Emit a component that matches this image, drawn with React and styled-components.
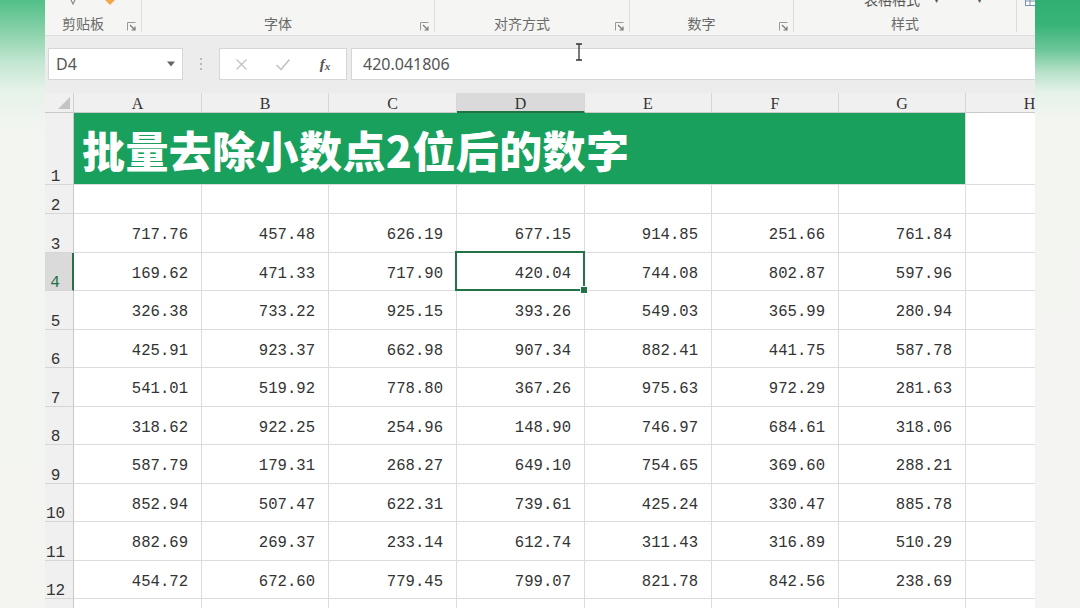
import React from 'react';
import styled, { createGlobalStyle } from 'styled-components';

const GlobalStyle = createGlobalStyle`
  html, body {
    margin: 0;
    padding: 0;
  }
  body {
    width: 1080px;
    height: 608px;
    overflow: hidden;
    background: #f4f5f1;
    font-family: "Noto Sans", "Noto Sans CJK SC", sans-serif;
  }
`;

const Screen = styled.div`
  display: flex;
  width: 1080px;
  height: 608px;
  overflow: hidden;
`;

const SideBlur = styled.div`
  flex: 0 0 45px;
  background: ${({ $side }) =>
    $side === 'left'
      ? 'linear-gradient(to bottom, #52bf88 0px, #86d1a8 30px, #bfe5cf 60px, #e6f2e9 90px, #f2f5f0 130px, #f4f5f1 100%)'
      : 'linear-gradient(to bottom, #2fb072 0px, #39b478 25px, #6cc699 50px, #b7e1c9 72px, #e4f2e9 92px, #f3f5f1 120px, #f4f5f2 100%)'};
`;

const Window = styled.div`
  flex: 0 0 990px;
  display: flex;
  flex-direction: column;
  overflow: hidden;
  background: #fff;
  position: relative;
`;

/* ---------- ribbon ---------- */

const Ribbon = styled.div`
  flex: 0 0 35px;
  display: flex;
  background: #f5f5f3;
  border-bottom: 1px solid #dedede;
`;

const Group = styled.div`
  flex: 0 0 ${({ $w }) => $w}px;
  display: flex;
  flex-direction: column;
  height: 32px;
  border-right: 1px solid #dcdcdc;
`;

const GroupTop = styled.div`
  height: 11px;
  overflow: hidden;
  display: flex;
  align-items: flex-end;
`;

const TopPeek = styled.div`
  display: flex;
  align-items: flex-end;
  margin-bottom: 5px;
  padding-left: ${({ $x }) => $x}px;
  gap: ${({ $gap }) => $gap || 0}px;
  color: #555;
  font-size: 14px;
  line-height: 14px;
  font-family: "Noto Sans CJK SC", sans-serif;
`;

const GroupFoot = styled.div`
  flex: 1;
  display: flex;
  align-items: center;
  padding-top: 3px;
`;

const GroupLabel = styled.div`
  flex: 1;
  text-align: center;
  font-size: 14px;
  color: #6a6a6a;
  font-family: "Noto Sans CJK SC", sans-serif;
  line-height: 16px;
`;

const Launcher = styled.div`
  flex: 0 0 20px;
  display: flex;
  align-items: flex-end;
  justify-content: center;
  height: 12px;
  padding-top: 4px;
`;

/* ---------- formula bar ---------- */

const FormulaArea = styled.div`
  flex: 0 0 32px;
  display: flex;
  align-items: stretch;
  background: #ececec;
  padding: 12px 0 13px 3px;
`;

const NameBox = styled.div`
  flex: 0 0 135px;
  box-sizing: border-box;
  background: #fff;
  border: 1px solid #d6d6d6;
  display: flex;
  align-items: center;
  justify-content: space-between;
  padding: 0 6px 0 7px;
  font-size: 16px;
  color: #555;
`;

const DotsSep = styled.div`
  flex: 0 0 36px;
  display: flex;
  flex-direction: column;
  align-items: center;
  justify-content: center;
  gap: 3px;

  span {
    width: 2px;
    height: 2px;
    border-radius: 1px;
    background: #a8a8a8;
  }
`;

const FxBox = styled.div`
  flex: 0 0 128px;
  box-sizing: border-box;
  background: #fff;
  border: 1px solid #d6d6d6;
  display: flex;
  align-items: center;
  justify-content: space-around;
`;

const FxIcon = styled.span`
  width: 30px;
  display: flex;
  justify-content: center;
  color: ${({ $dim }) => ($dim ? '#c2c2c2' : '#555')};
  font-family: "Liberation Serif", serif;
  font-style: italic;
  font-weight: 700;
  font-size: 15px;
`;

const FormulaInput = styled.div`
  flex: 1;
  margin-left: 4px;
  background: #fff;
  border: 1px solid #d6d6d6;
  border-right: none;
  display: flex;
  align-items: center;
  padding-left: 11px;
  font-size: 16px;
  color: #555;
`;

/* ---------- sheet ---------- */

const Sheet = styled.div`
  display: grid;
  grid-template-columns: 29px 128px 127px 128px 128px 127px 127px 127px 128px;
  grid-template-rows: 20px 72px 29px 39px 38px 39px 38px 39px 38px 39px 38px 39px 38px 30px;
  width: 1059px;
`;

const Corner = styled.div`
  background: #f0f0f0;
  border-right: 1px solid #d2d2d2;
  border-bottom: 1px solid #c9c9c9;
  display: flex;
  align-items: flex-end;
  justify-content: flex-end;
  padding: 0 3px 3px 0;
`;

const ColHead = styled.div`
  background: ${({ $active }) => ($active ? '#dadada' : '#f0f0f0')};
  border-right: 1px solid #d6d6d6;
  border-bottom: ${({ $active }) => ($active ? '2px solid #217346' : '1px solid #c9c9c9')};
  display: flex;
  align-items: center;
  justify-content: center;
  padding-top: 3px;
  font-family: "Liberation Serif", serif;
  font-size: 16px;
  color: #333;
`;

const RowHead = styled.div`
  background: ${({ $active }) => ($active ? '#dadada' : '#f0f0f0')};
  border-right: ${({ $active }) => ($active ? '2px solid #217346' : '1px solid #c9c9c9')};
  border-bottom: 1px solid #d6d6d6;
  display: flex;
  align-items: flex-end;
  justify-content: center;
  padding-right: 7px;
  font-family: "Liberation Mono", monospace;
  font-size: 16px;
  line-height: 14px;
  color: ${({ $active }) => ($active ? '#217346' : '#333')};
`;

const Cell = styled.div`
  position: relative;
  border-right: 1px solid #dcdcdc;
  border-bottom: 1px solid #dcdcdc;
  display: flex;
  align-items: center;
  justify-content: flex-end;
  padding: 4px 13px 0 0;
  font-family: "Liberation Mono", monospace;
  font-size: 15.6px;
  color: #333;

  ${({ $selected }) =>
    $selected &&
    `
    &::after {
      content: '';
      position: absolute;
      left: -2px;
      top: -2px;
      right: -1px;
      bottom: -1px;
      border: 2px solid #217346;
    }
    &::before {
      content: '';
      position: absolute;
      right: -4px;
      bottom: -4px;
      width: 6px;
      height: 6px;
      background: #217346;
      border: 1px solid #fff;
      z-index: 2;
    }
  `}
`;

const TitleCell = styled.div`
  grid-column: 2 / span 7;
  background: #18a05c;
  border-bottom: 1px solid #dcdcdc;
  border-right: 1px solid #dcdcdc;
  display: flex;
  align-items: center;
  padding-left: 8px;
  color: #fff;
  font-family: "Noto Sans CJK SC", sans-serif;
  font-weight: 900;
  font-size: 43px;
  letter-spacing: 0.4px;
  white-space: nowrap;
`;

const TextCursor = styled.svg`
  position: absolute;
  left: 529px;
  top: 43px;
`;

const LauncherIcon = () => (
  <svg width="9" height="9" viewBox="0 0 9 9">
    <path d="M0.5 8.5 V0.5 H8.5" fill="none" stroke="#9a9a9a" strokeWidth="1" />
    <path d="M3 3 L8 8 M8 4.5 V8 H4.5" fill="none" stroke="#7a7a7a" strokeWidth="1.2" />
  </svg>
);

const groups = [
  { w: 96, label: '剪贴板', launcher: true, peek: 'clip' },
  { w: 292, label: '字体', launcher: true },
  { w: 194, label: '对齐方式', launcher: true },
  { w: 163, label: '数字', launcher: true },
  { w: 222, label: '样式', launcher: false, peek: 'style' },
  { w: 60, label: '', launcher: false, peek: 'cells' },
];

const data = [
  ['717.76', '457.48', '626.19', '677.15', '914.85', '251.66', '761.84'],
  ['169.62', '471.33', '717.90', '420.04', '744.08', '802.87', '597.96'],
  ['326.38', '733.22', '925.15', '393.26', '549.03', '365.99', '280.94'],
  ['425.91', '923.37', '662.98', '907.34', '882.41', '441.75', '587.78'],
  ['541.01', '519.92', '778.80', '367.26', '975.63', '972.29', '281.63'],
  ['318.62', '922.25', '254.96', '148.90', '746.97', '684.61', '318.06'],
  ['587.79', '179.31', '268.27', '649.10', '754.65', '369.60', '288.21'],
  ['852.94', '507.47', '622.31', '739.61', '425.24', '330.47', '885.78'],
  ['882.69', '269.37', '233.14', '612.74', '311.43', '316.89', '510.29'],
  ['454.72', '672.60', '779.45', '799.07', '821.78', '842.56', '238.69'],
];

const cols = ['A', 'B', 'C', 'D', 'E', 'F', 'G', 'H'];

const Peek = ({ kind }) => {
  if (kind === 'clip') {
    return (
      <TopPeek $x={25} $gap={28}>
        <svg width="6" height="8" viewBox="0 0 6 8">
          <path d="M1 2 L3 6 L5 2" fill="none" stroke="#888" strokeWidth="1.2" />
        </svg>
        <svg width="12" height="12" viewBox="0 0 12 12">
          <path d="M6 1 L11 6 L6 11 L1 6 Z" fill="#f0a94a" />
        </svg>
      </TopPeek>
    );
  }
  if (kind === 'style') {
    return (
      <TopPeek $x={70} $gap={14}>
        <span>表格格式</span>
        <span style={{ fontSize: 10 }}>▾</span>
        <span style={{ fontSize: 10, marginLeft: 24 }}>▾</span>
      </TopPeek>
    );
  }
  if (kind === 'cells') {
    return (
      <TopPeek $x={8}>
        <svg width="14" height="14" viewBox="0 0 14 14">
          <rect x="0.5" y="0.5" width="13" height="13" fill="#fff" stroke="#7d8fa8" />
          <path d="M0.5 5 H13.5 M0.5 9 H13.5 M5 0.5 V13.5" stroke="#7d8fa8" />
        </svg>
      </TopPeek>
    );
  }
  return null;
};

export default function App() {
  return (
    <>
      <GlobalStyle />
      <Screen>
        <SideBlur $side="left" />
        <Window>
          <Ribbon>
            {groups.map((g, i) => (
              <Group key={i} $w={g.w}>
                <GroupTop>{g.peek && <Peek kind={g.peek} />}</GroupTop>
                <GroupFoot>
                  <GroupLabel>{g.label}</GroupLabel>
                  {g.launcher && (
                    <Launcher>
                      <LauncherIcon />
                    </Launcher>
                  )}
                </GroupFoot>
              </Group>
            ))}
          </Ribbon>

          <FormulaArea>
            <NameBox>
              <span>D4</span>
              <svg width="10" height="6" viewBox="0 0 10 6">
                <path d="M1 0.5 L9 0.5 L5 5.5 Z" fill="#666" />
              </svg>
            </NameBox>
            <DotsSep>
              <span />
              <span />
              <span />
            </DotsSep>
            <FxBox>
              <FxIcon $dim>
                <svg width="13" height="13" viewBox="0 0 13 13">
                  <path d="M1.5 1.5 L11.5 11.5 M11.5 1.5 L1.5 11.5" stroke="#c4c4c4" strokeWidth="1.4" />
                </svg>
              </FxIcon>
              <FxIcon $dim>
                <svg width="16" height="13" viewBox="0 0 16 13">
                  <path d="M1.5 7 L6 11.5 L14.5 1.5" fill="none" stroke="#c4c4c4" strokeWidth="1.6" />
                </svg>
              </FxIcon>
              <FxIcon>
                f<span style={{ fontSize: 11, marginTop: 4 }}>x</span>
              </FxIcon>
            </FxBox>
            <FormulaInput>420.041806</FormulaInput>
          </FormulaArea>

          <Sheet>
            <Corner>
              <svg width="12" height="12" viewBox="0 0 12 12">
                <path d="M12 0 L12 12 L0 12 Z" fill="#c4c4c4" />
              </svg>
            </Corner>
            {cols.map((c) => (
              <ColHead key={c} $active={c === 'D'}>
                {c}
              </ColHead>
            ))}

            <RowHead>1</RowHead>
            <TitleCell>批量去除小数点2位后的数字</TitleCell>
            <Cell />

            <RowHead>2</RowHead>
            {cols.map((c) => (
              <Cell key={c} />
            ))}

            {data.map((row, r) => (
              <React.Fragment key={r}>
                <RowHead $active={r === 1}>{r + 3}</RowHead>
                {row.map((v, c) => (
                  <Cell key={c} $selected={r === 1 && c === 3}>
                    {v}
                  </Cell>
                ))}
                <Cell />
              </React.Fragment>
            ))}

            <RowHead>13</RowHead>
            {cols.map((c) => (
              <Cell key={c} />
            ))}
          </Sheet>

          <TextCursor width="10" height="18" viewBox="0 0 10 18">
            <path d="M2 1 H8 M5 1 V17 M2 17 H8" stroke="#333" strokeWidth="1.3" fill="none" />
          </TextCursor>
        </Window>
        <SideBlur $side="right" />
      </Screen>
    </>
  );
}
